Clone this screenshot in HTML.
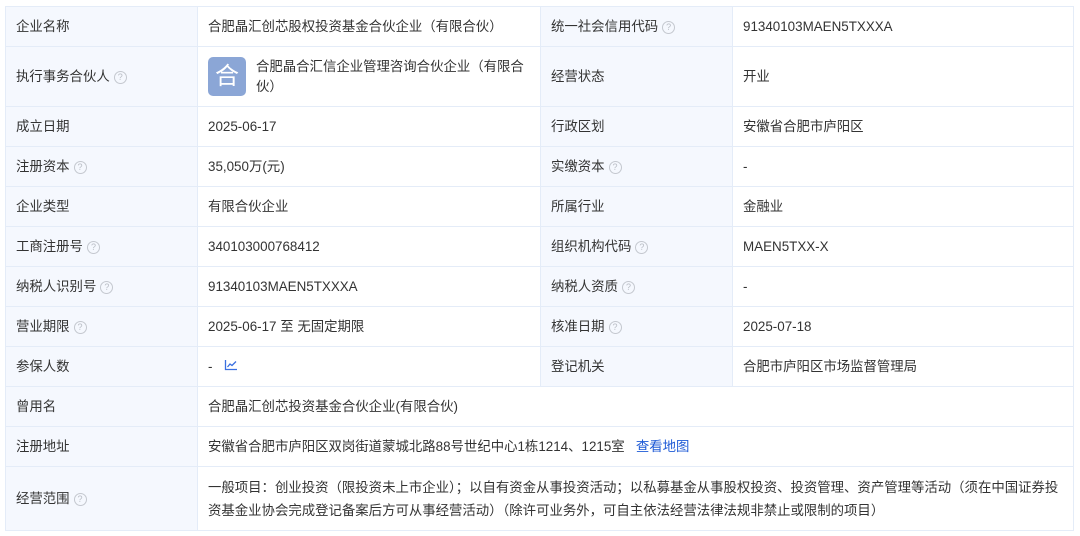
<!DOCTYPE html>
<html><head><meta charset="utf-8">
<style>
*{margin:0;padding:0;box-sizing:border-box}
body{width:1080px;height:536px;background:#fff;font-family:"Liberation Sans","Noto Sans CJK SC",sans-serif;font-size:13.4px;color:#333;overflow:hidden}
table{position:absolute;left:5px;top:6px;width:1069px;border-collapse:collapse;table-layout:fixed}
td{border:1px solid #e4ecf8;padding:0 10px;height:40px;vertical-align:middle;line-height:20px}
td.l{background:#f5f8fe;color:#333}
.q{display:inline-block;width:13px;height:13px;border:1px solid #c4c8cf;border-radius:50%;color:#b8bcc4;font-size:9px;line-height:11px;text-align:center;vertical-align:middle;position:relative;top:1px;margin-left:4px}
.av{display:inline-block;width:38px;height:39px;background:#8ba6d6;border-radius:5px;color:#fff;font-size:24px;line-height:39px;text-align:center;vertical-align:middle}
a{color:#1e5ad6;text-decoration:none}
</style></head><body>
<table>
<colgroup><col style="width:192px"><col style="width:343px"><col style="width:192px"><col></colgroup>
<tr><td class="l">企业名称</td><td>合肥晶汇创芯股权投资基金合伙企业（有限合伙）</td><td class="l">统一社会信用代码<span class="q">?</span></td><td>91340103MAEN5TXXXA</td></tr>
<tr style="height:60px"><td class="l">执行事务合伙人<span class="q">?</span></td><td><div style="display:flex;align-items:center"><span class="av">合</span><span style="margin-left:10px;flex:1">合肥晶合汇信企业管理咨询合伙企业（有限合伙）</span></div></td><td class="l">经营状态</td><td>开业</td></tr>
<tr><td class="l">成立日期</td><td>2025-06-17</td><td class="l">行政区划</td><td>安徽省合肥市庐阳区</td></tr>
<tr><td class="l">注册资本<span class="q">?</span></td><td>35,050万(元)</td><td class="l">实缴资本<span class="q">?</span></td><td>-</td></tr>
<tr><td class="l">企业类型</td><td>有限合伙企业</td><td class="l">所属行业</td><td>金融业</td></tr>
<tr><td class="l">工商注册号<span class="q">?</span></td><td>340103000768412</td><td class="l">组织机构代码<span class="q">?</span></td><td>MAEN5TXX-X</td></tr>
<tr><td class="l">纳税人识别号<span class="q">?</span></td><td>91340103MAEN5TXXXA</td><td class="l">纳税人资质<span class="q">?</span></td><td>-</td></tr>
<tr><td class="l">营业期限<span class="q">?</span></td><td>2025-06-17 至 无固定期限</td><td class="l">核准日期<span class="q">?</span></td><td>2025-07-18</td></tr>
<tr><td class="l">参保人数</td><td>- <svg width="14" height="12" viewBox="0 0 14 12" style="margin-left:8px;vertical-align:0"><path d="M1.5 1V10.5H13" fill="none" stroke="#3a6fe0" stroke-width="1.3"/><path d="M3.5 8L6 5L8 6.5L12 2.5" fill="none" stroke="#3a6fe0" stroke-width="1.3"/></svg></td><td class="l">登记机关</td><td>合肥市庐阳区市场监督管理局</td></tr>
<tr><td class="l">曾用名</td><td colspan="3">合肥晶汇创芯投资基金合伙企业(有限合伙)</td></tr>
<tr><td class="l">注册地址</td><td colspan="3">安徽省合肥市庐阳区双岗街道蒙城北路88号世纪中心1栋1214、1215室 &nbsp; <a>查看地图</a></td></tr>
<tr style="height:64px"><td class="l">经营范围<span class="q">?</span></td><td colspan="3" style="line-height:23px">一般项目：创业投资（限投资未上市企业）；以自有资金从事投资活动；以私募基金从事股权投资、投资管理、资产管理等活动（须在中国证券投资基金业协会完成登记备案后方可从事经营活动）（除许可业务外，可自主依法经营法律法规非禁止或限制的项目）</td></tr>
</table>
</body></html>
